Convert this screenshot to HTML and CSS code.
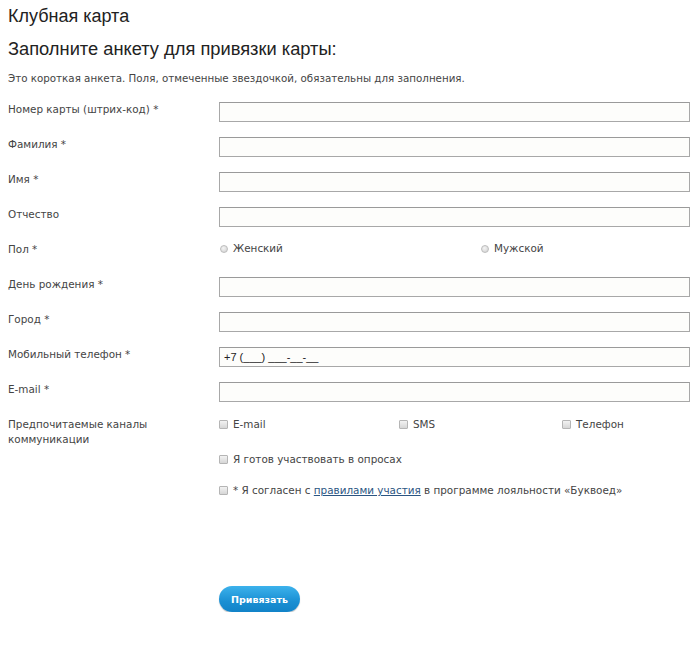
FILE: index.html
```html
<!DOCTYPE html>
<html lang="ru">
<head>
<meta charset="utf-8">
<title>Клубная карта</title>
<link rel="stylesheet" href="styles.css">
</head>
<body>
<div class="page">
  <h1 class="title">Клубная карта</h1>
  <h2 class="subtitle">Заполните анкету для привязки карты:</h2>
  <p class="intro">Это короткая анкета. Поля, отмеченные звездочкой, обязательны для заполнения.</p>
  <form class="form">
    <div class="row"><label class="label">Номер карты (штрих-код) *</label><input class="field" type="text"></div>
    <div class="row"><label class="label">Фамилия *</label><input class="field" type="text"></div>
    <div class="row"><label class="label">Имя *</label><input class="field" type="text"></div>
    <div class="row"><label class="label">Отчество</label><input class="field" type="text"></div>
    <div class="row row-choice">
      <label class="label">Пол *</label>
      <div class="choices choices-gender">
        <label class="opt"><span class="radio"></span>Женский</label>
        <label class="opt"><span class="radio"></span>Мужской</label>
      </div>
    </div>
    <div class="row"><label class="label">День рождения *</label><input class="field" type="text"></div>
    <div class="row"><label class="label">Город *</label><input class="field" type="text"></div>
    <div class="row"><label class="label">Мобильный телефон *</label><input class="field field-phone" type="text" value="+7 (___) ___-__-__"></div>
    <div class="row"><label class="label">E-mail *</label><input class="field" type="text"></div>
    <div class="row row-channels">
      <label class="label">Предпочитаемые каналы коммуникации</label>
      <div class="choices choices-channels">
        <label class="opt"><span class="check"></span>E-mail</label>
        <label class="opt"><span class="check"></span>SMS</label>
        <label class="opt"><span class="check"></span>Телефон</label>
      </div>
    </div>
    <div class="single"><label class="opt"><span class="check"></span>Я готов участвовать в опросах</label></div>
    <div class="single"><label class="opt"><span class="check"></span>* Я согласен с&nbsp;<a class="link" href="#">правилами участия</a>&nbsp;в программе лояльности «Буквоед»</label></div>
    <div class="actions"><button class="btn" type="button">Привязать</button></div>
  </form>
</div>
</body>
</html>
```
FILE: styles.css
```css
html, body {
  margin: 0;
  padding: 0;
  background: #ffffff;
}
.page {
  padding: 0 8px;
  font-family: "DejaVu Sans", Verdana, sans-serif;
  color: #444;
}
.title {
  margin: 0;
  padding-top: 5px;
  font-family: "Liberation Sans", Arial, sans-serif;
  font-weight: normal;
  font-size: 18px;
  line-height: 22px;
  color: #222;
}
.subtitle {
  margin: 0;
  padding-top: 10px;
  font-family: "Liberation Sans", Arial, sans-serif;
  font-weight: normal;
  font-size: 18.3px;
  line-height: 24px;
  color: #222;
}
.intro {
  margin: 0;
  padding-top: 10px;
  font-size: 10.3px;
  line-height: 14px;
  color: #444;
}
.form {
  margin-top: 9px;
}
.row {
  display: grid;
  grid-template-columns: 211px 471px;
  align-items: center;
  height: 35px;
}
.label {
  font-size: 10.4px;
  line-height: 15px;
  color: #444;
  position: relative;
  top: -2px;
}
.field {
  box-sizing: border-box;
  height: 20px;
  width: 471px;
  margin: 0;
  padding: 0 4px;
  border: 1px solid #a8a8a8;
  border-top-color: #9a9a9a;
  background: #fdfdfb;
  font-family: "Liberation Sans", Arial, sans-serif;
  font-size: 11px;
  color: #222;
}
.choices {
  display: grid;
  align-items: center;
}
.choices-gender {
  grid-template-columns: 261px 1fr;
}
.row-choice .choices { position: relative; top: -3px; }
.row-channels {
  align-items: start;
  height: auto;
  padding-top: 8px;
  padding-bottom: 5px;
}
.row-channels .label { top: 0; }
.choices-channels {
  grid-template-columns: 180px 163px 1fr;
}
.opt {
  display: flex;
  align-items: center;
  font-size: 10.4px;
  line-height: 15px;
  color: #444;
  padding-left: 0;
}
.radio {
  width: 6px;
  height: 6px;
  border-radius: 50%;
  border: 1px solid #bdbdbd;
  background: radial-gradient(circle at 40% 35%, #f4f4f4, #cfcfcf);
  margin: 0 5px 0 1px;
}
.check {
  width: 7px;
  height: 7px;
  border: 1px solid #b5b5b5;
  border-radius: 1px;
  background: linear-gradient(#f2f2f2, #d6d6d6);
  margin-right: 5px;
}
.single {
  padding-left: 211px;
  height: 31px;
}
.link {
  color: #2b5582;
  text-decoration: underline;
}
.actions {
  padding-left: 211px;
  padding-top: 72px;
}
.btn {
  width: 81px;
  height: 26px;
  border: none;
  border-radius: 13px;
  background: linear-gradient(#3cb2ec, #1a8fd3 60%, #1283c8);
  box-shadow: 0 1px 1px rgba(0,0,0,0.25);
  color: #fff;
  font-family: "DejaVu Sans", Verdana, sans-serif;
  font-weight: bold;
  font-size: 9.5px;
  padding: 0;
  cursor: pointer;
}
```
